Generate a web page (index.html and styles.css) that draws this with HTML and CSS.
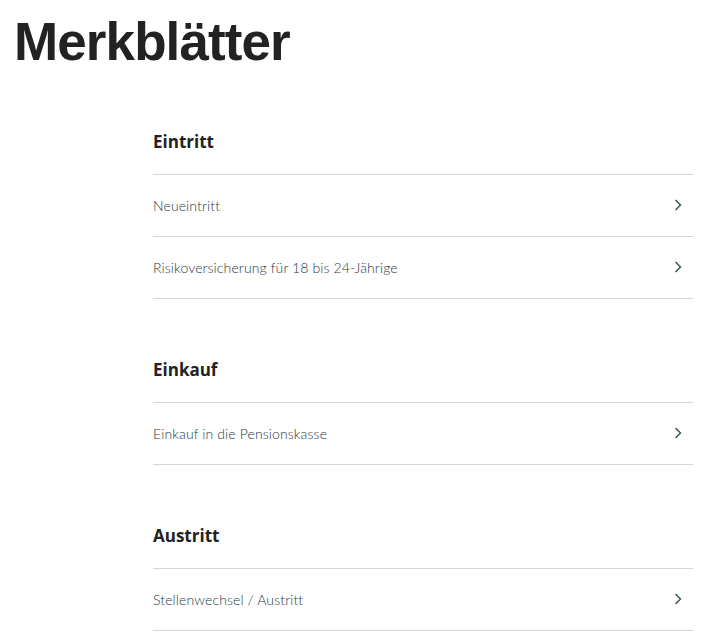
FILE: index.html
```html
<!DOCTYPE html>
<html lang="de">
<head>
<meta charset="utf-8">
<title>Merkblätter</title>
<link rel="stylesheet" href="styles.css">
</head>
<body>
<main class="page">
  <h1 class="title">Merkblätter</h1>
  <div class="content">
    <section class="group">
      <h2 class="group-title">Eintritt</h2>
      <ul class="list">
        <li><a class="item" href="#"><span>Neueintritt</span><svg class="chev" viewBox="0 0 8 12" width="8" height="12"><path d="M1.5 1 L6.5 6 L1.5 11" fill="none" stroke="currentColor" stroke-width="1.3"/></svg></a></li>
        <li><a class="item" href="#"><span>Risikoversicherung für 18 bis 24-Jährige</span><svg class="chev" viewBox="0 0 8 12" width="8" height="12"><path d="M1.5 1 L6.5 6 L1.5 11" fill="none" stroke="currentColor" stroke-width="1.3"/></svg></a></li>
      </ul>
    </section>
    <section class="group">
      <h2 class="group-title">Einkauf</h2>
      <ul class="list">
        <li><a class="item" href="#"><span>Einkauf in die Pensionskasse</span><svg class="chev" viewBox="0 0 8 12" width="8" height="12"><path d="M1.5 1 L6.5 6 L1.5 11" fill="none" stroke="currentColor" stroke-width="1.3"/></svg></a></li>
      </ul>
    </section>
    <section class="group">
      <h2 class="group-title">Austritt</h2>
      <ul class="list">
        <li><a class="item" href="#"><span>Stellenwechsel / Austritt</span><svg class="chev" viewBox="0 0 8 12" width="8" height="12"><path d="M1.5 1 L6.5 6 L1.5 11" fill="none" stroke="currentColor" stroke-width="1.3"/></svg></a></li>
      </ul>
    </section>
  </div>
</main>
</body>
</html>
```
FILE: styles.css
```css
html, body {
  margin: 0;
  padding: 0;
  background: #ffffff;
}
.page {
  padding: 0 33px 0 14px;
}
.title {
  margin: 0;
  padding-top: 12px;
  font-family: "Liberation Sans", Arial, sans-serif;
  font-weight: 700;
  font-size: 53px;
  line-height: 60px;
  letter-spacing: -0.9px;
  color: #222222;
}
.content {
  margin-left: 139px;
  padding-top: 57px;
}
.group + .group {
  margin-top: 58px;
}
.group-title {
  margin: 0 0 20px 0;
  padding-top: 1px;
  font-family: "Open Sans", sans-serif;
  font-weight: 700;
  font-size: 17px;
  line-height: 24px;
  color: #222222;
}
.list {
  list-style: none;
  margin: 0;
  padding: 0;
  border-top: 1px solid #d6d6d6;
}
.list li {
  border-bottom: 1px solid #d6d6d6;
}
.item {
  display: flex;
  align-items: center;
  justify-content: space-between;
  height: 60px;
  padding-bottom: 1px;
  text-decoration: none;
  font-family: "Lato", sans-serif;
  font-weight: 300;
  font-size: 14px;
  letter-spacing: 0.12px;
  color: #2a383b;
}
.chev {
  color: #2c4a46;
  margin-right: 11px;
}
```
